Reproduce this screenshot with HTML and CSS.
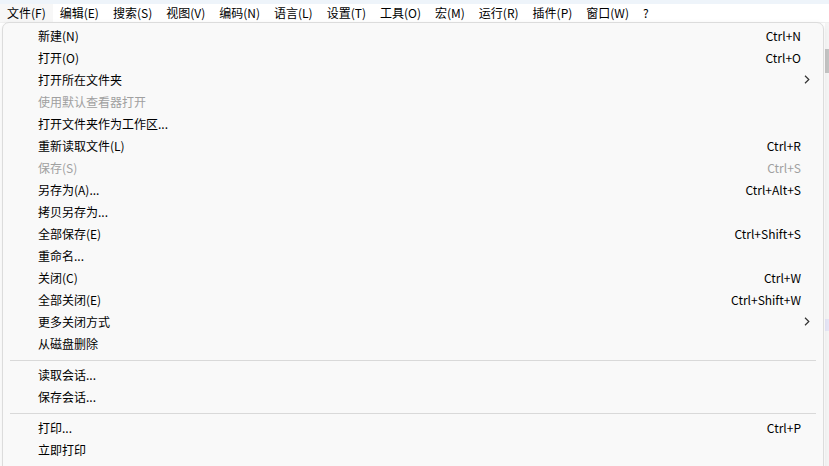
FILE: index.html
```html
<!DOCTYPE html>
<html lang="zh-CN">
<head>
<meta charset="utf-8">
<title>Notepad++ 文件菜单</title>
<link rel="stylesheet" href="styles.css">
</head>
<body>
<div class="app">
  <nav class="menubar">
    <span class="mitem active">文件(F)</span>
    <span class="mitem">编辑(E)</span>
    <span class="mitem">搜索(S)</span>
    <span class="mitem">视图(V)</span>
    <span class="mitem">编码(N)</span>
    <span class="mitem">语言(L)</span>
    <span class="mitem">设置(T)</span>
    <span class="mitem">工具(O)</span>
    <span class="mitem">宏(M)</span>
    <span class="mitem">运行(R)</span>
    <span class="mitem">插件(P)</span>
    <span class="mitem">窗口(W)</span>
    <span class="mitem">?</span>
  </nav>
  <div class="workspace">
    <div class="editor"></div>
    <div class="scrollbar">
      <div class="thumb"></div>
      <div class="mark"></div>
    </div>
  </div>

  <div class="popup">
    <div class="row"><span class="label">新建(N)</span><span class="key">Ctrl+N</span></div>
    <div class="row"><span class="label">打开(O)</span><span class="key">Ctrl+O</span></div>
    <div class="row"><span class="label">打开所在文件夹</span><svg class="arrow" width="6" height="9" viewBox="0 0 6 9"><path d="M1 0.8 L4.8 4.5 L1 8.2" fill="none" stroke="#333" stroke-width="1.2"/></svg></div>
    <div class="row disabled"><span class="label">使用默认查看器打开</span></div>
    <div class="row"><span class="label">打开文件夹作为工作区...</span></div>
    <div class="row"><span class="label">重新读取文件(L)</span><span class="key">Ctrl+R</span></div>
    <div class="row disabled"><span class="label">保存(S)</span><span class="key">Ctrl+S</span></div>
    <div class="row"><span class="label">另存为(A)...</span><span class="key">Ctrl+Alt+S</span></div>
    <div class="row"><span class="label">拷贝另存为...</span></div>
    <div class="row"><span class="label">全部保存(E)</span><span class="key">Ctrl+Shift+S</span></div>
    <div class="row"><span class="label">重命名...</span></div>
    <div class="row"><span class="label">关闭(C)</span><span class="key">Ctrl+W</span></div>
    <div class="row"><span class="label">全部关闭(E)</span><span class="key">Ctrl+Shift+W</span></div>
    <div class="row"><span class="label">更多关闭方式</span><svg class="arrow" width="6" height="9" viewBox="0 0 6 9"><path d="M1 0.8 L4.8 4.5 L1 8.2" fill="none" stroke="#333" stroke-width="1.2"/></svg></div>
    <div class="row"><span class="label">从磁盘删除</span></div>
    <div class="sep"></div>
    <div class="row"><span class="label">读取会话...</span></div>
    <div class="row"><span class="label">保存会话...</span></div>
    <div class="sep"></div>
    <div class="row"><span class="label">打印...</span><span class="key">Ctrl+P</span></div>
    <div class="row"><span class="label">立即打印</span></div>
  </div>
</div>
</body>
</html>
```

FILE: styles.css
```css
html, body {
  margin: 0;
  padding: 0;
  width: 829px;
  height: 466px;
  overflow: hidden;
  background: #ffffff;
  font-family: "Noto Sans CJK SC", "Noto Sans", sans-serif;
  font-size: 12px;
  color: #000;
}

.app {
  position: relative;
  width: 829px;
  height: 466px;
  display: flex;
  flex-direction: column;
}

.menubar {
  display: flex;
  height: 18px;
  border-top: 4px solid #eef4fa;
  background: #ffffff;
  align-items: center;
  line-height: 18px;
}

.mitem {
  padding: 0 7px;
  white-space: nowrap;
  color: #000;
}

.mitem.active {
  background: #f7f7f7;
}

.workspace {
  flex: 1;
  display: flex;
  border-top: 1px solid #f0f0f0;
}

.editor {
  flex: 1;
  background: #ffffff;
}

.scrollbar {
  width: 4px;
  background: #f5f5f5;
  display: flex;
  flex-direction: column;
  padding-top: 26px;
}

.thumb {
  height: 24px;
  background: #c4c4c4;
}

.mark {
  margin-top: 246px;
  height: 12px;
  background: #e6e6f6;
}

.popup {
  position: absolute;
  left: 2px;
  top: 22px;
  width: 822px;
  height: 460px;
  background: #f9f9f9;
  border: 1px solid #dcdcdc;
  border-radius: 7px;
  padding-top: 1px;
  box-sizing: border-box;
  box-shadow: 0 2px 6px rgba(0, 0, 0, 0.08);
}

.row {
  display: flex;
  align-items: center;
  height: 22px;
  padding: 0 22px 0 35px;
  white-space: nowrap;
}

.row .label {
  flex: 1;
}

.row .key {
  color: #000;
}

.row.disabled .label,
.row.disabled .key {
  color: #a0a0a0;
}

.arrow {
  margin-right: -9px;
}

.sep {
  height: 1px;
  background: #d9d9d9;
  margin: 6px 7px 2px 7px;
}
```
